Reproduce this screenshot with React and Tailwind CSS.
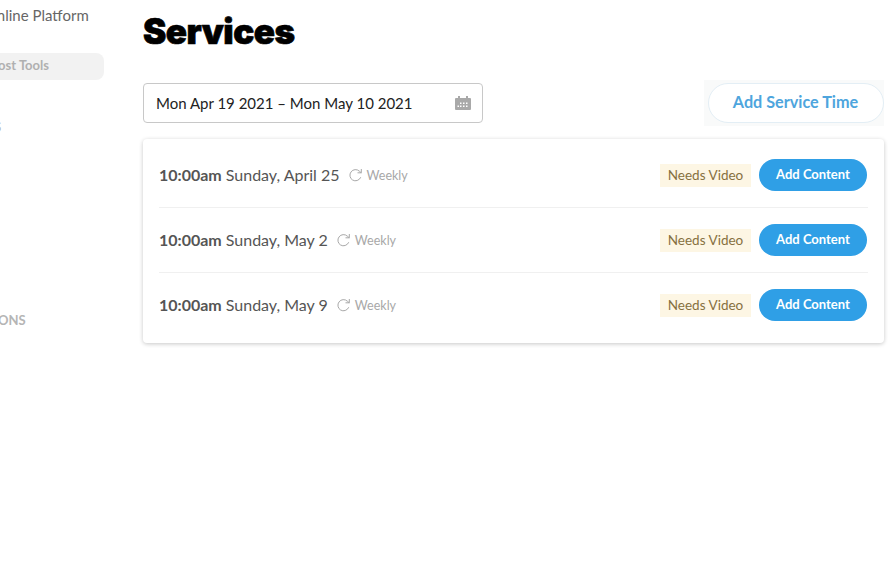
import React from "react";

const services = [
  { date: "Sunday, April 25" },
  { date: "Sunday, May 2" },
  { date: "Sunday, May 9" },
];

function CalendarIcon() {
  return (
    <svg width="16" height="14" viewBox="0 0 16 14" fill="none">
      <path d="M0 3a1 1 0 0 1 1-1h14a1 1 0 0 1 1 1v10a1 1 0 0 1-1 1H1a1 1 0 0 1-1-1z" fill="#a9a9a9" />
      <rect x="3" y="0" width="2" height="3" fill="#a9a9a9" />
      <rect x="11" y="0" width="2" height="3" fill="#a9a9a9" />
      <g fill="#ffffff">
        <rect x="5" y="6.5" width="1.5" height="1.5" />
        <rect x="8" y="6.5" width="1.5" height="1.5" />
        <rect x="11" y="6.5" width="1.5" height="1.5" />
        <rect x="2.5" y="9.5" width="1.5" height="1.5" />
        <rect x="5" y="9.5" width="1.5" height="1.5" />
        <rect x="8" y="9.5" width="1.5" height="1.5" />
        <rect x="11" y="9.5" width="1.5" height="1.5" />
      </g>
    </svg>
  );
}

function RepeatIcon() {
  return (
    <svg width="15" height="15" viewBox="0 0 15 15" fill="none" stroke="#a8a8a8" strokeWidth="1">
      <path d="M12.6 9.6A5.6 5.6 0 1 1 11.4 3.2L13 4.6" strokeLinecap="round" />
      <path d="M13.3 1.4v3.4H9.9" strokeLinecap="round" strokeLinejoin="round" />
    </svg>
  );
}

function ServiceRow({ service, last }) {
  return (
    <div className={"flex h-[65px] items-center justify-between border-b " + (last ? "border-transparent" : "border-[#f0f0f0]")}>
      <div className="flex items-center text-[16px] text-[#555555]">
        <span className="font-bold">10:00am</span>
        <span className="ml-1">{service.date}</span>
        <span className="ml-2 mr-1">
          <RepeatIcon />
        </span>
        <span className="mt-[3px] text-[12.5px] text-[#a8a8a8]">Weekly</span>
      </div>
      <div className="mr-px flex items-center gap-2">
        <span className="flex h-[23px] w-[91px] items-center justify-center bg-[#fdf6e4] pt-px text-[13.5px] text-[#86703f]">
          Needs Video
        </span>
        <button className="h-8 w-[108px] rounded-full bg-[#2f9fe6] text-[13px] font-bold text-white">
          Add Content
        </button>
      </div>
    </div>
  );
}

export default function App() {
  return (
    <div className="flex min-h-[580px] overflow-hidden bg-white font-['Lato','Liberation_Sans',sans-serif]">
      {/* sidebar is cut off by the left edge */}
      <div className="w-[143px] shrink-0 overflow-hidden">
        <div className="-ml-[15px] mt-[6px] whitespace-nowrap text-[15px] leading-[18px] text-[#666666]">
          Online Platform
        </div>
        <div className="mt-[29px] flex h-[27px] w-[104px] items-center justify-end rounded-r-lg bg-[#f2f2f2] pr-[55px] pb-0.5 text-[13px] font-bold whitespace-nowrap text-[#b0b0b0]">
          Host Tools
        </div>
        <div className="-ml-[6px] mt-[39px] text-[13px] leading-4 font-bold text-[#b5b5b5]">S</div>
        <div className="-ml-[31px] mt-[177px] text-[13px] leading-4 font-bold whitespace-nowrap text-[#b5b5b5]">
          ACTIONS
        </div>
      </div>

      <div className="mr-[10px] flex-1">
        <h1 className="mt-[10px] font-['Inter',sans-serif] text-[35px] leading-[42px] font-black tracking-[-0.5px] text-black [-webkit-text-stroke:0.7px_black]">
          Services
        </h1>
        <div className="mt-[31px] flex items-center justify-between">
          <div className="flex h-10 w-[340px] items-center justify-between rounded border border-[#c8c8c8] pr-[11px] pl-3 text-[15px] text-[#222222]">
            <span>Mon Apr 19 2021 – Mon May 10 2021</span>
            <CalendarIcon />
          </div>
          <div className="-my-[3px] bg-[#f9fafa] py-[3px] pl-1">
            <button className="h-10 w-[176px] rounded-full border border-[#e3eef5] bg-white pr-px pb-0.5 text-[16.2px] font-bold text-[#4ea5dd]">
              Add Service Time
            </button>
          </div>
        </div>
        <div className="mt-4 rounded bg-white px-4 pt-1 pb-[5px] shadow-[0_1px_4px_rgba(0,0,0,0.22)]">
          {services.map((service, i) => (
            <ServiceRow key={service.date} service={service} last={i === services.length - 1} />
          ))}
        </div>
      </div>
    </div>
  );
}
